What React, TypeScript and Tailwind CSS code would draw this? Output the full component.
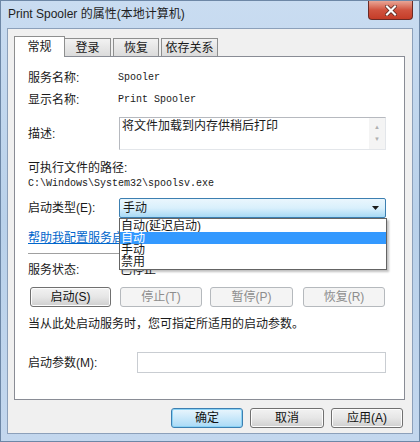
import React from 'react'

const cjk = { fontFamily: '"Liberation Sans","Noto Sans CJK SC",sans-serif' }
const mono = { fontFamily: '"Liberation Mono","Noto Sans CJK SC",monospace' }

const Btn = ({
  label,
  width,
  disabled,
  focused,
}: {
  label: string
  width: string
  disabled?: boolean
  focused?: boolean
}) => (
  <div
    className={`flex h-[20px] items-center justify-center rounded-[3px] border text-[12px] leading-none ${width} ${
      disabled
        ? 'border-[#b5b9bd] bg-[#f4f4f4] text-[#8d8d8d]'
        : focused
          ? 'border-[#3c7fb1] bg-gradient-to-b from-[#eaf6fd] to-[#a9daf6] text-[#111] shadow-[inset_0_0_0_1px_#8ad2f5]'
          : 'border-[#707070] bg-gradient-to-b from-[#f2f2f2] via-[#e6e6e6] to-[#cfcfcf] text-[#111] shadow-[inset_0_0_0_1px_#fcfcfc]'
    }`}
  >
    {label}
  </div>
)

export default function App() {
  return (
    <div
      className="flex h-[442px] w-[420px] flex-col overflow-hidden border border-[#6d87a6] bg-gradient-to-b from-[#c9dcf1] via-[#b9d1ea] to-[#c3d7ee] text-[#1a1a1a]"
      style={cjk}
    >
      {/* Title bar */}
      <div className="flex h-[27px] items-start">
        <div className="pl-[7px] pt-[7px] text-[12px] leading-none text-[#1e1e1e]">
          Print Spooler 的属性(本地计算机)
        </div>
        <div className="ml-auto mr-[6px] flex h-[19px] w-[45px] items-center justify-center rounded-b-[4px] border border-t-0 border-[#6b2a25] bg-gradient-to-b from-[#e8a596] via-[#d0533f] to-[#c43c27]">
          <svg width="12" height="11" viewBox="0 0 12 11">
            <path d="M2 1.5 L10 9.5 M10 1.5 L2 9.5" stroke="#4a1c16" strokeWidth="3.6" strokeLinecap="square" />
            <path d="M2 1.5 L10 9.5 M10 1.5 L2 9.5" stroke="#ffffff" strokeWidth="2.2" strokeLinecap="square" />
          </svg>
        </div>
      </div>

      {/* Dialog body */}
      <div className="mx-[6px] flex h-[406px] flex-col border border-[#8ca0ba] bg-[#f0f0f0]">
        {/* Tabs */}
        <div className="flex h-[27px] items-end pl-[6px] text-[12px] leading-none">
          <div className="relative z-10 -mb-px flex h-[21px] w-[51px] items-start justify-center border border-b-0 border-[#8e8f8f] bg-white pt-[4px]">
            常规
          </div>
          <div className="flex h-[18px] w-[46px] items-start justify-center border border-b-0 border-l-0 border-[#8e8f8f] bg-gradient-to-b from-[#f2f2f2] to-[#dbdbdb] pt-[3px]">
            登录
          </div>
          <div className="ml-[2px] flex h-[18px] w-[46px] items-start justify-center border border-b-0 border-[#8e8f8f] bg-gradient-to-b from-[#f2f2f2] to-[#dbdbdb] pt-[3px]">
            恢复
          </div>
          <div className="ml-[2px] flex h-[18px] w-[57px] items-start justify-center border border-b-0 border-[#8e8f8f] bg-gradient-to-b from-[#f2f2f2] to-[#dbdbdb] pt-[3px]">
            依存关系
          </div>
        </div>

        {/* Panel */}
        <div className="ml-[6px] flex h-[344px] w-[391px] flex-col border border-[#898c95] bg-white pl-[13px] text-[12px] leading-none">
          <div className="mt-[14px] flex h-[14px] items-center">
            <span className="w-[90px]">服务名称:</span>
            <span className="text-[10px]" style={mono}>Spooler</span>
          </div>
          <div className="mt-[8px] flex h-[14px] items-center">
            <span className="w-[90px]">显示名称:</span>
            <span className="text-[10px]" style={mono}>Print Spooler</span>
          </div>
          <div className="mt-[10px] flex h-[33px] items-center">
            <span className="w-[91px]">描述:</span>
            <div className="flex h-[33px] w-[267px] border border-[#b6b9bf] border-r-[#e3e6ea] border-b-[#e3e6ea] bg-white">
              <div className="flex-1 pl-[2px] pt-[2px]">将文件加载到内存供稍后打印</div>
              <div className="flex w-[16px] flex-col items-center bg-[#f4f4f4] pt-[5px] text-[6px] leading-[8px] text-[#b0b0b0]">
                <span>▲</span>
                <span className="mt-[4px]">▼</span>
              </div>
            </div>
          </div>
          <div className="mt-[11px] flex h-[14px] items-center">可执行文件的路径:</div>
          <div className="mt-[2px] flex h-[14px] items-center text-[10px]" style={mono}>
            C:\Windows\System32\spoolsv.exe
          </div>

          {/* Startup type with open list */}
          <div className="relative mt-[7px] flex h-[20px] items-center">
            <span className="w-[91px]">启动类型(E):</span>
            <div className="flex h-[20px] w-[267px] items-center rounded-[2px] border border-[#3c7fb1] bg-gradient-to-b from-[#eaf6fd] via-[#d9f0fc] to-[#a7d9f5] pl-[3px] pr-[6px]">
              <span>手动</span>
              <svg className="ml-auto" width="7" height="4" viewBox="0 0 7 4">
                <path d="M0 0 H7 L3.5 4 Z" fill="#1b1b1b" />
              </svg>
            </div>
            <div className="absolute left-[91px] top-[20px] z-20 flex h-[52px] w-[268px] flex-col border border-[#646464] bg-white py-[1px] shadow-[2px_2px_2px_rgba(0,0,0,0.25)]">
              <div className="flex h-[12px] items-center pl-[1px]">自动(延迟启动)</div>
              <div className="flex h-[12px] items-center bg-[#3399ff] pl-[1px] text-white">自动</div>
              <div className="flex h-[13px] items-center pl-[1px]">手动</div>
              <div className="flex h-[12px] items-center pl-[1px]">禁用</div>
            </div>
          </div>

          <div className="mt-[13px] flex h-[14px] items-center">
            <span className="text-[#0066cc] underline decoration-[#0066cc]">帮助我配置服务启动选项。</span>
          </div>
          <div className="mt-[8px] h-px w-[357px] bg-[#a0a0a0]" />
          <div className="mt-[9px] flex h-[14px] items-center">
            <span className="w-[92px]">服务状态:</span>
            <span>已停止</span>
          </div>

          <div className="mt-[10px] flex h-[20px] items-center">
            <Btn label="启动(S)" width="w-[81px] ml-[2px]" />
            <Btn label="停止(T)" width="w-[82px] ml-[9px]" disabled />
            <Btn label="暂停(P)" width="w-[83px] ml-[8px]" disabled />
            <Btn label="恢复(R)" width="w-[82px] ml-[10px]" disabled />
          </div>

          <div className="mt-[10px] flex h-[14px] items-center">
            当从此处启动服务时，您可指定所适用的启动参数。
          </div>

          <div className="mt-[21px] flex h-[21px] items-center">
            <span className="w-[109px]">启动参数(M):</span>
            <div className="h-[21px] w-[249px] border border-[#c9cdd2] bg-white" />
          </div>
        </div>

        {/* Bottom buttons */}
        <div className="mt-[8px] flex items-center pl-[163px]">
          <Btn label="确定" width="w-[72px]" focused />
          <Btn label="取消" width="w-[74px] ml-[7px]" />
          <Btn label="应用(A)" width="w-[72px] ml-[7px]" />
        </div>
      </div>
    </div>
  )
}
